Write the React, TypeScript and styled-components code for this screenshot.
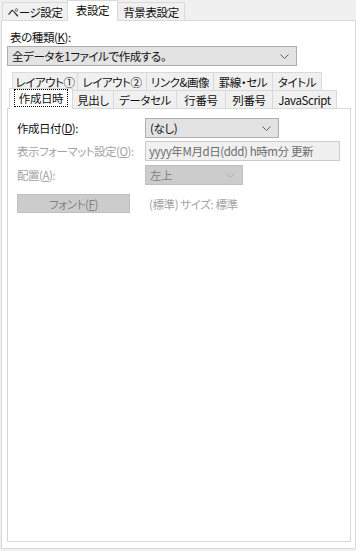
import React from "react";
import styled, { createGlobalStyle } from "styled-components";

const Global = createGlobalStyle`
  html, body { margin: 0; padding: 0; background: #f0f0f0; }
  * { box-sizing: border-box; }
`;

const Root = styled.div`
  width: 356px;
  height: 551px;
  background: #f0f0f0;
  font-family: "Noto Sans CJK JP", "Meiryo UI", sans-serif;
  font-size: 11.5px;
  letter-spacing: -0.4px;
  font-feature-settings: "palt";
  color: #111;
  overflow: hidden;
`;

const TopTabBar = styled.div`
  display: flex;
  align-items: flex-end;
  height: 21px;
  padding-left: 2px;
  position: relative;
  z-index: 2;
`;

const TopTab = styled.div<{ $w: number; $active?: boolean }>`
  width: ${(p) => p.$w}px;
  height: ${(p) => (p.$active ? 21 : 18)}px;
  margin-bottom: ${(p) => (p.$active ? 0 : 1)}px;
  display: flex;
  align-items: center;
  justify-content: center;
  padding-bottom: ${(p) => (p.$active ? 2 : 0)}px;
  background: ${(p) => (p.$active ? "#ffffff" : "#f0f0f0")};
  border: 1px solid #d9d9d9;
  border-bottom: none;
  margin-left: ${(p) => (p.$active ? -1 : 0)}px;
  margin-right: ${(p) => (p.$active ? -1 : 0)}px;
  position: relative;
  z-index: ${(p) => (p.$active ? 2 : 1)};
  line-height: 14px;
  white-space: nowrap;
`;

const Panel = styled.div`
  margin-top: -1px;
  margin-left: 1px;
  width: 355px;
  height: 529px;
  background: #ffffff;
  border: 1px solid #d9d9d9;
  padding: 9px 0 0 5px;
  position: relative;
  z-index: 1;
`;

const FieldLabel = styled.div`
  height: 14px;
  line-height: 14px;
  padding-left: 3px;
  margin-bottom: 2px;
`;

const Select = styled.div<{ $w: number; $disabled?: boolean }>`
  width: ${(p) => p.$w}px;
  height: 20px;
  display: flex;
  align-items: center;
  justify-content: space-between;
  padding: 0 7px 0 4px;
  background: ${(p) => (p.$disabled ? "#cccccc" : "#e3e3e3")};
  border: 1px solid ${(p) => (p.$disabled ? "#bfbfbf" : "#adadad")};
  color: ${(p) => (p.$disabled ? "#838383" : "#111")};
  line-height: 14px;
  white-space: nowrap;
`;

const TextInput = styled.div<{ $w: number }>`
  width: ${(p) => p.$w}px;
  height: 20px;
  display: flex;
  align-items: center;
  padding-left: 3px;
  background: #f0f0f0;
  border: 1px solid #cccccc;
  color: #6d6d6d;
  line-height: 14px;
  white-space: nowrap;
`;

const TabRows = styled.div`
  margin-top: 6px;
`;

const TabRow = styled.div<{ $pad: number }>`
  display: flex;
  align-items: flex-start;
  height: 18px;
  padding-left: ${(p) => p.$pad}px;
`;

const InnerTab = styled.div<{ $w: number; $active?: boolean }>`
  width: ${(p) => p.$w}px;
  height: ${(p) => (p.$active ? 21 : 18)}px;
  margin-top: ${(p) => (p.$active ? -2 : 0)}px;
  display: flex;
  align-items: center;
  justify-content: center;
  padding-bottom: ${(p) => (p.$active ? 2 : 0)}px;
  background: ${(p) => (p.$active ? "#ffffff" : "#f0f0f0")};
  border: 1px solid #d9d9d9;
  border-bottom: none;
  margin-left: -1px;
  position: relative;
  z-index: ${(p) => (p.$active ? 3 : 1)};
  line-height: 14px;
  white-space: nowrap;
`;

const Focus = styled.span`
  display: inline-flex;
  align-items: center;
  height: 16px;
  padding: 0 4px;
  outline: 1px dotted #000;
`;

const InnerPanel = styled.div`
  width: 344px;
  height: 434px;
  background: #ffffff;
  border: 1px solid #d9d9d9;
  padding: 9px 0 0 9px;
`;

const FormRow = styled.div<{ $top: number; $h?: number }>`
  display: flex;
  align-items: center;
  height: ${(p) => p.$h ?? 20}px;
  margin-top: ${(p) => p.$top}px;
`;

const RowLabel = styled.div<{ $disabled?: boolean }>`
  width: 128px;
  flex: none;
  color: ${(p) => (p.$disabled ? "#a3a3a3" : "#111")};
  line-height: 14px;
  white-space: nowrap;
  letter-spacing: -0.5px;
`;

const Button = styled.div`
  width: 113px;
  height: 19px;
  display: flex;
  align-items: center;
  justify-content: center;
  background: #cccccc;
  border: 1px solid #bfbfbf;
  color: #838383;
  line-height: 14px;
`;

const ButtonCell = styled.div`
  width: 128px;
  flex: none;
`;

const Note = styled.div`
  padding-left: 4px;
  color: #a3a3a3;
  line-height: 14px;
  white-space: nowrap;
`;

const U = styled.span`
  text-decoration: underline;
  text-underline-offset: 1px;
`;

const Chevron = ({ color }: { color: string }) => (
  <svg width="9" height="5" viewBox="0 0 9 5">
    <polyline points="0.5,0.5 4.5,4.5 8.5,0.5" fill="none" stroke={color} strokeWidth="1" />
  </svg>
);

const row1 = [
  { t: "レイアウト①", w: 66 },
  { t: "レイアウト②", w: 70 },
  { t: "リンク&画像", w: 68 },
  { t: "罫線・セル", w: 60 },
  { t: "タイトル", w: 50 },
];

const row2 = [
  { t: "見出し", w: 42 },
  { t: "データセル", w: 64 },
  { t: "行番号", w: 50 },
  { t: "列番号", w: 48 },
  { t: "JavaScript", w: 65 },
];

export default function App() {
  return (
    <Root>
      <Global />
      <TopTabBar>
        <TopTab $w={66}>ページ設定</TopTab>
        <TopTab $w={51} $active>
          表設定
        </TopTab>
        <TopTab $w={68}>背景表設定</TopTab>
      </TopTabBar>
      <Panel>
        <FieldLabel>
          表の種類(<U>K</U>):
        </FieldLabel>
        <Select $w={290}>
          <span>全データを1ファイルで作成する。</span>
          <Chevron color="#606060" />
        </Select>
        <TabRows>
          <TabRow $pad={6}>
            {row1.map((r) => (
              <InnerTab key={r.t} $w={r.w}>
                {r.t}
              </InnerTab>
            ))}
          </TabRow>
          <TabRow $pad={3}>
            <InnerTab $w={64} $active>
              <Focus>作成日時</Focus>
            </InnerTab>
            {row2.map((r) => (
              <InnerTab key={r.t} $w={r.w}>
                {r.t}
              </InnerTab>
            ))}
          </TabRow>
        </TabRows>
        <InnerPanel>
          <FormRow $top={0}>
            <RowLabel>
              作成日付(<U>D</U>):
            </RowLabel>
            <Select $w={134}>
              <span>(なし)</span>
              <Chevron color="#606060" />
            </Select>
          </FormRow>
          <FormRow $top={3}>
            <RowLabel $disabled>
              表示フォーマット設定(<U>O</U>):
            </RowLabel>
            <TextInput $w={195}>yyyy年M月d日(ddd) h時m分 更新</TextInput>
          </FormRow>
          <FormRow $top={4}>
            <RowLabel $disabled>
              配置(<U>A</U>):
            </RowLabel>
            <Select $w={98} $disabled>
              <span>左上</span>
              <Chevron color="#b0b0b0" />
            </Select>
          </FormRow>
          <FormRow $top={9} $h={19}>
            <ButtonCell>
              <Button>
                フォント(<U>F</U>)
              </Button>
            </ButtonCell>
            <Note>(標準) サイズ: 標準</Note>
          </FormRow>
        </InnerPanel>
      </Panel>
    </Root>
  );
}
